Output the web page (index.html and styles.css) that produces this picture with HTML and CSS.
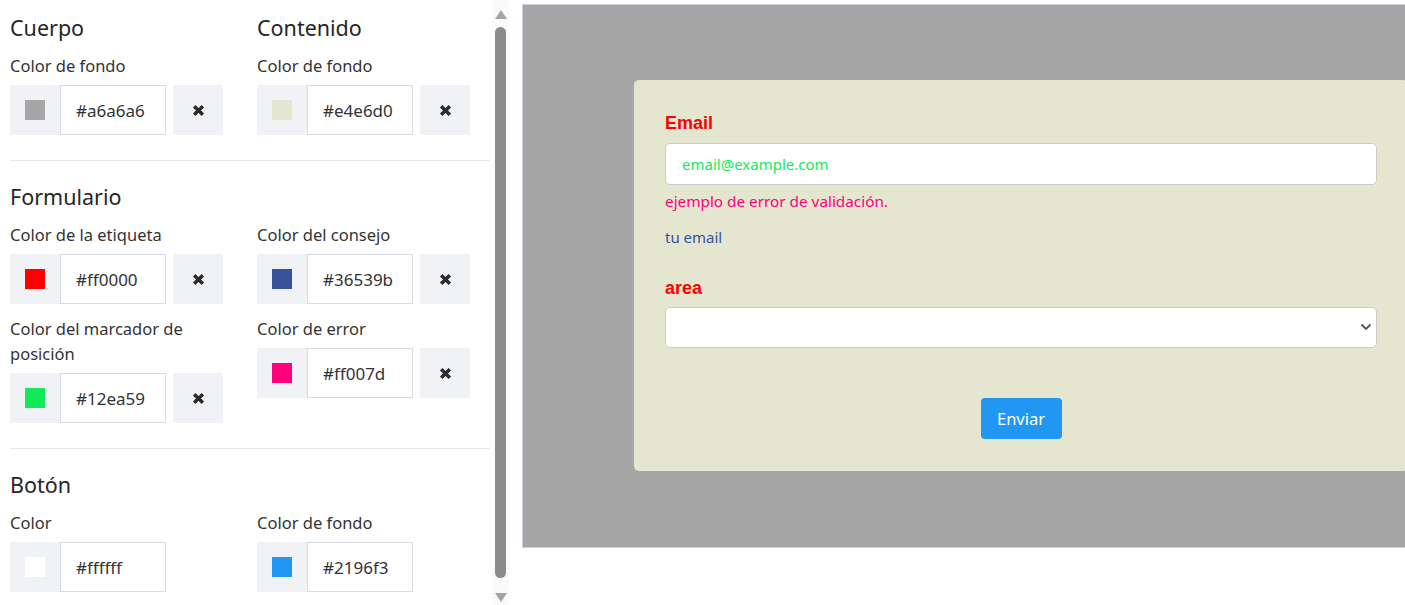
FILE: index.html
```html
<!DOCTYPE html>
<html lang="es">
<head>
<meta charset="utf-8">
<title>Editor de tema</title>
<link rel="stylesheet" href="styles.css">
</head>
<body>
<aside class="panel">
  <div class="settings">
    <section class="group">
      <div class="grid">
        <div class="field">
          <h2 class="group-title">Cuerpo</h2>
          <label class="field-label">Color de fondo</label>
          <div class="picker">
            <span class="swatch-cell"><span class="swatch sw-a6"></span></span>
            <input class="hex" type="text" value="#a6a6a6">
            <button class="clear" type="button"><svg viewBox="0 0 12 12" width="13" height="13"><path d="M2 2L10 10M10 2L2 10"/></svg></button>
          </div>
        </div>
        <div class="field">
          <h2 class="group-title">Contenido</h2>
          <label class="field-label">Color de fondo</label>
          <div class="picker">
            <span class="swatch-cell"><span class="swatch sw-e4"></span></span>
            <input class="hex" type="text" value="#e4e6d0">
            <button class="clear" type="button"><svg viewBox="0 0 12 12" width="13" height="13"><path d="M2 2L10 10M10 2L2 10"/></svg></button>
          </div>
        </div>
      </div>
    </section>

    <section class="group">
      <h2 class="group-title">Formulario</h2>
      <div class="grid">
        <div class="field">
          <label class="field-label">Color de la etiqueta</label>
          <div class="picker">
            <span class="swatch-cell"><span class="swatch sw-red"></span></span>
            <input class="hex" type="text" value="#ff0000">
            <button class="clear" type="button"><svg viewBox="0 0 12 12" width="13" height="13"><path d="M2 2L10 10M10 2L2 10"/></svg></button>
          </div>
        </div>
        <div class="field">
          <label class="field-label">Color del consejo</label>
          <div class="picker">
            <span class="swatch-cell"><span class="swatch sw-blue"></span></span>
            <input class="hex" type="text" value="#36539b">
            <button class="clear" type="button"><svg viewBox="0 0 12 12" width="13" height="13"><path d="M2 2L10 10M10 2L2 10"/></svg></button>
          </div>
        </div>
        <div class="field">
          <label class="field-label">Color del marcador de posición</label>
          <div class="picker">
            <span class="swatch-cell"><span class="swatch sw-green"></span></span>
            <input class="hex" type="text" value="#12ea59">
            <button class="clear" type="button"><svg viewBox="0 0 12 12" width="13" height="13"><path d="M2 2L10 10M10 2L2 10"/></svg></button>
          </div>
        </div>
        <div class="field">
          <label class="field-label">Color de error</label>
          <div class="picker">
            <span class="swatch-cell"><span class="swatch sw-pink"></span></span>
            <input class="hex" type="text" value="#ff007d">
            <button class="clear" type="button"><svg viewBox="0 0 12 12" width="13" height="13"><path d="M2 2L10 10M10 2L2 10"/></svg></button>
          </div>
        </div>
      </div>
    </section>

    <section class="group">
      <h2 class="group-title">Botón</h2>
      <div class="grid">
        <div class="field">
          <label class="field-label">Color</label>
          <div class="picker">
            <span class="swatch-cell"><span class="swatch sw-white"></span></span>
            <input class="hex" type="text" value="#ffffff">
          </div>
        </div>
        <div class="field">
          <label class="field-label">Color de fondo</label>
          <div class="picker">
            <span class="swatch-cell"><span class="swatch sw-btn"></span></span>
            <input class="hex" type="text" value="#2196f3">
          </div>
        </div>
      </div>
    </section>
  </div>

  <div class="scrollbar">
    <span class="arrow arrow-up"></span>
    <span class="thumb"></span>
    <span class="arrow arrow-down"></span>
  </div>
</aside>

<main class="preview">
  <form class="card">
    <label class="form-label">Email</label>
    <input class="form-input" type="text" placeholder="email@example.com">
    <p class="form-error">ejemplo de error de validación.</p>
    <p class="form-hint">tu email</p>

    <label class="form-label label-area">area</label>
    <div class="select-wrap">
      <select class="form-select"><option></option></select>
      <svg class="chevron" viewBox="0 0 12 8" width="12" height="8"><path d="M1.5 1.5L6 6L10.5 1.5"/></svg>
    </div>

    <div class="actions">
      <button class="submit" type="button">Enviar</button>
    </div>
  </form>
</main>
</body>
</html>
```

FILE: styles.css
```css
* {
  box-sizing: border-box;
}

html, body {
  margin: 0;
  height: 605px;
  overflow: hidden;
  background: #ffffff;
}

body {
  display: flex;
  align-items: flex-start;
  font-family: "Noto Sans", "Open Sans", sans-serif;
  color: #333333;
}

/* ---------- settings panel ---------- */

.panel {
  width: 509px;
  height: 605px;
  flex: none;
  display: flex;
  overflow: hidden;
}

.settings {
  width: 492px;
  padding: 15px 2px 0 10px;
}

.group {
  border-bottom: 1px solid #e8e9ee;
  padding-bottom: 25px;
}

.group + .group {
  padding-top: 23px;
}

.group-title {
  margin: 0 0 12px;
  font-size: 21.5px;
  line-height: 26px;
  font-weight: 400;
  color: #262626;
}

.grid {
  display: grid;
  grid-template-columns: 247px 1fr;
  row-gap: 12px;
}

.field-label {
  display: block;
  font-size: 16.5px;
  line-height: 25px;
  color: #333333;
  margin-bottom: 7px;
  padding-right: 25px;
}

.picker {
  display: flex;
  height: 50px;
}

.swatch-cell {
  width: 50px;
  height: 50px;
  background: #f1f2f6;
  display: flex;
  align-items: center;
  justify-content: center;
}

.swatch {
  width: 20px;
  height: 20px;
}

.sw-a6 { background: #a6a6a6; }
.sw-e4 { background: #e4e6d0; }
.sw-red { background: #ff0000; }
.sw-blue { background: #36539b; }
.sw-green { background: #12ea59; }
.sw-pink { background: #ff007d; }
.sw-white { background: #ffffff; }
.sw-btn { background: #2196f3; }

.hex {
  width: 106px;
  height: 50px;
  margin: 0;
  border: 1px solid #d8dbe4;
  padding: 0 0 0 15px;
  font-family: inherit;
  font-size: 17px;
  color: #333333;
  background: #ffffff;
  outline: none;
}

.clear {
  width: 50px;
  height: 50px;
  margin: 0 0 0 7px;
  padding: 0;
  border: 0;
  background: #f1f2f6;
  display: flex;
  align-items: center;
  justify-content: center;
}

.clear svg {
  fill: none;
  stroke: #2b2b2b;
  stroke-width: 3.2;
}

/* ---------- scrollbar ---------- */

.scrollbar {
  width: 17px;
  height: 605px;
  background: #fafafa;
  display: flex;
  flex-direction: column;
  align-items: center;
  padding-top: 10px;
}

.arrow {
  width: 0;
  height: 0;
  border-left: 6px solid transparent;
  border-right: 6px solid transparent;
}

.arrow-up {
  border-bottom: 9px solid #a3a3a3;
}

.arrow-down {
  border-top: 9px solid #a3a3a3;
  margin-top: 15px;
}

.thumb {
  width: 11px;
  height: 551px;
  margin-top: 8px;
  border-radius: 6px;
  background: #8b8b8b;
}

/* ---------- preview ---------- */

.preview {
  flex: 1;
  margin: 4px 0 0 13px;
  height: 544px;
  border: 1px solid #c9d2de;
  border-right: 0;
  background: #a6a6a6;
  overflow: hidden;
  padding: 75px 0 0 111px;
}

.card {
  width: 774px;
  margin: 0;
  padding: 32px 31px 32px 31px;
  background: #e4e6d0;
  border-radius: 5px;
  display: flex;
  flex-direction: column;
}

.form-label {
  font-family: "Liberation Sans", Arial, sans-serif;
  font-weight: 700;
  font-size: 18px;
  line-height: 22px;
  color: #ff0000;
}

.label-area {
  margin-top: 29px;
}

.form-input {
  margin-top: 9px;
  height: 42px;
  border: 1px solid #cccccc;
  border-radius: 5px;
  background: #ffffff;
  padding: 0 16px;
  font-family: inherit;
  font-size: 15px;
  outline: none;
}

.form-input::placeholder {
  color: #12ea59;
}

.form-error {
  margin: 5px 0 0;
  font-size: 15.3px;
  line-height: 22px;
  color: #ff007d;
}

.form-hint {
  margin: 14px 0 0;
  font-size: 15px;
  line-height: 22px;
  color: #36539b;
}

.select-wrap {
  position: relative;
  margin-top: 8px;
}

.form-select {
  display: block;
  width: 100%;
  height: 41px;
  border: 1px solid #cccccc;
  border-radius: 5px;
  background: #ffffff;
  appearance: none;
  -webkit-appearance: none;
  outline: none;
}

.chevron {
  position: absolute;
  right: 5px;
  top: 16px;
  fill: none;
  stroke: #555555;
  stroke-width: 1.8;
}

.actions {
  display: flex;
  justify-content: center;
  margin-top: 50px;
}

.submit {
  width: 81px;
  height: 41px;
  border: 0;
  border-radius: 4px;
  background: #2196f3;
  color: #ffffff;
  font-family: inherit;
  font-size: 16.5px;
  padding: 0;
}
```
